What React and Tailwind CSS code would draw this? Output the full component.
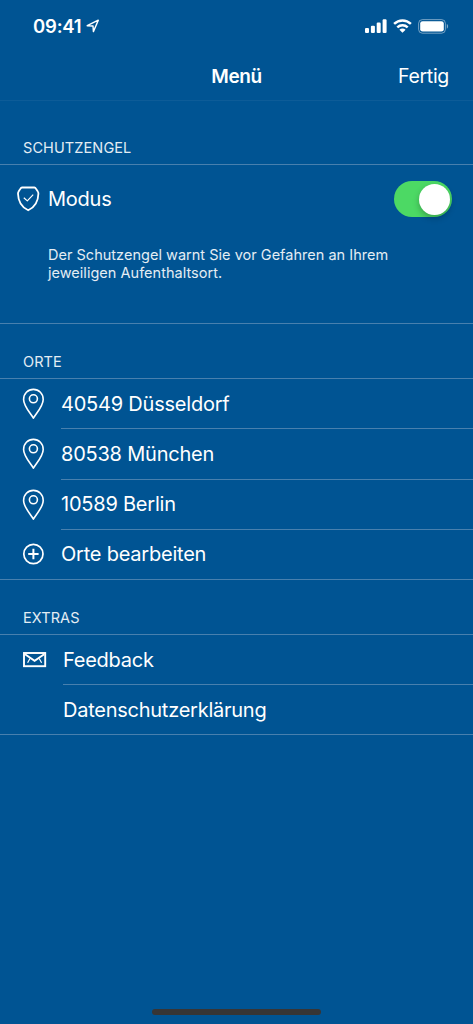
import React, { useState } from "react";

const PLACES = ["40549 Düsseldorf", "80538 München", "10589 Berlin"];

function PinIcon() {
  return (
    <svg width="23" height="32" viewBox="-0.4 0 23 32" fill="none" stroke="currentColor" strokeWidth="1.6">
      <path d="M11 30.2C8.6 25.8 1.2 18.2 1.2 11.4C1.2 5.6 5.4 1.4 11 1.4S20.8 5.6 20.8 11.4C20.8 18.2 13.4 25.8 11 30.2Z" strokeLinejoin="round" />
      <circle cx="11" cy="10.8" r="4" />
    </svg>
  );
}

function PlusIcon() {
  return (
    <svg width="23" height="22" viewBox="-0.4 0 23 22" fill="none" stroke="currentColor">
      <circle cx="11" cy="11" r="9.6" strokeWidth="1.7" />
      <path d="M11 5.8V16.2M5.8 11H16.2" strokeWidth="2" />
    </svg>
  );
}

function MailIcon() {
  return (
    <svg width="24" height="16" viewBox="0 0 24 16" fill="none" stroke="currentColor">
      <rect x="1" y="1" width="21.2" height="13.2" strokeWidth="1.9" />
      <path d="M2 2.2L11.6 8.9L21.2 2.2" strokeWidth="1.9" />
      <path d="M7 6.5L4.6 10.8M16.2 6.5L18.6 10.8" strokeWidth="1.2" />
    </svg>
  );
}

function ShieldIcon() {
  return (
    <svg width="24" height="26" viewBox="0 0 24 26" fill="none" stroke="currentColor" strokeLinejoin="round">
      <path d="M6 1.5H18.4C19.2 1.5 19.6 2 20 2.7L21.8 5.4C22.3 6.1 22.4 6.8 22.4 7.7C22.2 15.6 18.7 21.2 12.2 24.3C5.7 21.2 2.2 15.6 2 7.7C2 6.8 2.1 6.1 2.6 5.4L4.4 2.7C4.8 2 5.2 1.5 6 1.5Z" strokeWidth="1.8" />
      <path d="M7.8 11.7L11.3 14.9L17.2 8.7" strokeWidth="1.2" />
    </svg>
  );
}

function StatusBar() {
  return (
    <div className="flex h-[52px] items-center justify-between pl-[33px] pr-6">
      <div className="flex items-center gap-1">
        <span className="pt-px text-[18.5px] font-semibold tracking-[-0.2px]">09:41</span>
        <svg width="14" height="14" viewBox="0 0 14 14" fill="none" stroke="currentColor" strokeWidth="1.4" strokeLinejoin="round">
          <path d="M1.2 6.7L12.3 1.2L7.4 12.6L7 7Z" />
        </svg>
      </div>
      <div className="flex items-center gap-[6px]">
        <svg width="22" height="14" viewBox="0 0 22 14" fill="currentColor">
          <rect x="0" y="9" width="4" height="5" rx="1.1" />
          <rect x="5.9" y="6.7" width="4" height="7.3" rx="1.1" />
          <rect x="11.7" y="3.6" width="4" height="10.4" rx="1.1" />
          <rect x="17.6" y="0.3" width="4" height="13.7" rx="1.1" />
        </svg>
        <svg width="19" height="14" viewBox="0 0 19 14" fill="none" stroke="currentColor" strokeWidth="2.5">
          <path d="M1.1 4.9C5.9 0.3 13.1 0.3 17.9 4.9" />
          <path d="M4.3 8.3C7.3 5.5 11.7 5.5 14.7 8.3" />
          <path d="M9.5 13.8L6.4 10.7C8.2 9.1 10.8 9.1 12.6 10.7Z" fill="currentColor" stroke="none" />
        </svg>
        <svg width="31" height="15" viewBox="0 0 31 15" fill="none">
          <rect x="0.6" y="0.6" width="26.8" height="13.6" rx="3.8" stroke="currentColor" strokeOpacity="0.45" />
          <rect x="2.2" y="2.2" width="23.6" height="10.4" rx="2.4" fill="currentColor" />
          <path d="M28.8 5.1C30.5 5.8 30.5 9 28.8 9.7Z" fill="currentColor" fillOpacity="0.5" />
        </svg>
      </div>
    </div>
  );
}

function SectionTitle({ children }) {
  return (
    <h2 className="flex h-[55px] items-end border-b border-[#4880ae] pb-[7px] pl-[23px] text-[14.5px] leading-[18px] tracking-[0.1px] text-[#e4edf4]">
      {children}
    </h2>
  );
}

export default function App() {
  const [active, setActive] = useState(true);

  return (
    <div className="flex h-screen w-full flex-col overflow-hidden bg-[#005493] font-['Inter','Liberation_Sans',sans-serif] text-white">
      <StatusBar />
      <header className="grid h-[49px] grid-cols-3 items-center border-b border-[#0d5c98]">
        <span />
        <h1 className="pt-px text-center text-[19px] font-semibold leading-6 tracking-[-0.4px]">Menü</h1>
        <button className="pr-6 text-right text-[19.5px] leading-6 tracking-[-0.3px]">Fertig</button>
      </header>

      <section className="border-b border-[#4880ae] pt-[9px]">
        <SectionTitle>SCHUTZENGEL</SectionTitle>
        <div className="flex h-[68px] items-center pl-4 pr-[21px]">
          <ShieldIcon />
          <span className="ml-2 flex-1 text-[20px] tracking-[-0.25px]">Modus</span>
          <button
            role="switch"
            aria-checked={active}
            aria-label="Modus"
            onClick={() => setActive(!active)}
            className={`flex h-9 w-[58px] items-center rounded-full px-[2px] ${active ? "justify-end bg-[#4cd964]" : "justify-start bg-[#3d79aa]"}`}
          >
            <span className="h-[31px] w-[31px] rounded-full bg-white shadow-[0_3px_6px_rgba(0,0,0,0.25)]" />
          </button>
        </div>
        <p className="h-[90px] pl-12 pt-[13px] text-[14.5px] leading-[17.5px] tracking-[0.02px] text-[#e4edf4]">
          Der Schutzengel warnt Sie vor Gefahren an Ihrem
          <br />
          jeweiligen Aufenthaltsort.
        </p>
      </section>

      <section className="border-b border-[#4880ae]">
        <SectionTitle>ORTE</SectionTitle>
        <ul className="text-[20px] tracking-[-0.22px]">
          {PLACES.map((place) => (
            <li key={place} className="flex h-[50.3px] items-center pl-[22px]">
              <PinIcon />
              <span className="ml-4 flex h-full flex-1 items-center border-b border-[#4880ae]">{place}</span>
            </li>
          ))}
          <li className="flex h-[49px] items-center pl-[22px]">
            <PlusIcon />
            <span className="ml-4">Orte bearbeiten</span>
          </li>
        </ul>
      </section>

      <section className="border-b border-[#4880ae]">
        <SectionTitle>EXTRAS</SectionTitle>
        <ul className="text-[20px] tracking-[-0.25px]">
          <li className="flex h-[50px] items-center pl-[23px]">
            <MailIcon />
            <span className="ml-4 flex h-full flex-1 items-center border-b border-[#4880ae] pt-px">Feedback</span>
          </li>
          <li className="flex h-[49.5px] items-center pl-[63px] pt-px">Datenschutzerklärung</li>
        </ul>
      </section>

      <div className="mx-auto mb-[9px] mt-auto h-[6px] w-[169px] rounded-full bg-[#373535]" />
    </div>
  );
}
